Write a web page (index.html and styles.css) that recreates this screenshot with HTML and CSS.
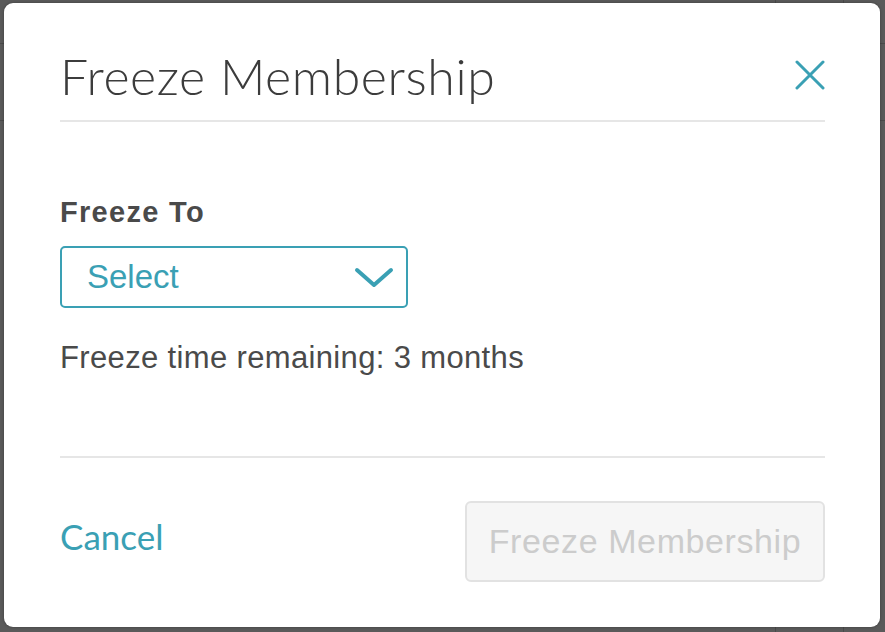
FILE: index.html
```html
<!DOCTYPE html>
<html lang="en">
<head>
<meta charset="utf-8">
<title>Freeze Membership</title>
<link rel="stylesheet" href="styles.css">
</head>
<body>
<div class="backdrop">
  <span class="bg-line bg-line-v1"></span>
  <span class="bg-line bg-line-v2"></span>
  <span class="bg-line bg-line-h1"></span>
  <span class="bg-line bg-line-h2"></span>
  <div class="modal">
    <header class="modal-header">
      <h1 class="modal-title">Freeze Membership</h1>
      <button class="close-btn" aria-label="Close">
        <svg width="30" height="30" viewBox="0 0 30 30"><path d="M2 2 L28 28 M28 2 L2 28" stroke="#3aa0b4" stroke-width="3" stroke-linecap="round" fill="none"/></svg>
      </button>
    </header>
    <section class="modal-body">
      <label class="field-label">Freeze To</label>
      <div class="select">
        <span class="select-text">Select</span>
        <svg class="chevron" width="40" height="24" viewBox="0 0 40 24"><path d="M3 4 L20 19 L37 4" stroke="#3aa0b4" stroke-width="4" stroke-linecap="round" stroke-linejoin="round" fill="none"/></svg>
      </div>
      <p class="info">Freeze time remaining: 3 months</p>
    </section>
    <footer class="modal-footer">
      <a class="cancel" href="#">Cancel</a>
      <button class="submit" disabled>Freeze Membership</button>
    </footer>
  </div>
</div>
</body>
</html>
```
FILE: styles.css
```css
html, body {
  margin: 0;
  padding: 0;
}
body {
  background: #5a5a5a;
  width: 885px;
  height: 632px;
  overflow: hidden;
}
.backdrop {
  position: relative;
  width: 885px;
  height: 632px;
  padding: 3px 5px 5px 4px;
  box-sizing: border-box;
}
.bg-line {
  position: absolute;
  background: #4a4a4a;
}
.bg-line-v1 { left: 775px; top: 0; width: 1px; height: 632px; }
.bg-line-v2 { left: 843px; top: 0; width: 1px; height: 632px; }
.bg-line-h1 { left: 0; top: 43px; width: 885px; height: 1px; }
.bg-line-h2 { left: 0; top: 120px; width: 885px; height: 1px; }
.modal {
  position: relative;
  width: 876px;
  height: 624px;
  background: #fff;
  border-radius: 9px;
  box-shadow: 0 0 3px rgba(0,0,0,0.35);
  padding: 0 55px 0 56px;
  box-sizing: border-box;
  display: flex;
  flex-direction: column;
}
.modal-header {
  height: 117px;
  flex-shrink: 0;
  border-bottom: 2px solid #e6e6e6;
  display: flex;
  align-items: flex-start;
  justify-content: space-between;
}
.modal-title {
  margin: 48px 0 0;
  font-family: "Lato", sans-serif;
  font-weight: 300;
  font-size: 50px;
  letter-spacing: 0.6px;
  color: #3c3c3c;
  line-height: 1;
}
.close-btn {
  border: 0;
  background: none;
  padding: 0;
  margin-top: 57px;
  width: 30px;
  height: 30px;
  display: flex;
}
.modal-body {
  height: 334px;
  flex-shrink: 0;
  border-bottom: 2px solid #e6e6e6;
  display: flex;
  flex-direction: column;
  align-items: flex-start;
  font-family: "Liberation Sans", Arial, sans-serif;
}
.field-label {
  margin-top: 74px;
  font-weight: 700;
  font-size: 29px;
  letter-spacing: 1.3px;
  line-height: 32px;
  color: #4a4a4a;
}
.select {
  margin-top: 18px;
  width: 348px;
  height: 62px;
  flex-shrink: 0;
  box-sizing: border-box;
  border: 2px solid #3aa0b4;
  border-radius: 5px;
  display: flex;
  align-items: center;
  justify-content: space-between;
  padding: 0 12px 0 25px;
}
.select-text {
  font-size: 33px;
  color: #3aa0b4;
}
.chevron {
  margin-top: 2px;
}
.info {
  margin: 33px 0 0;
  font-size: 31px;
  letter-spacing: 0.35px;
  line-height: 34px;
  color: #4a4a4a;
}
.modal-footer {
  display: flex;
  align-items: flex-start;
  justify-content: space-between;
  padding-top: 43px;
}
.cancel {
  margin-top: 14px;
  font-family: "Lato", sans-serif;
  font-size: 35px;
  color: #3aa0b4;
  text-decoration: none;
}
.submit {
  width: 360px;
  height: 81px;
  box-sizing: border-box;
  background: #f6f6f6;
  border: 2px solid #e2e2e2;
  border-radius: 6px;
  font-family: "Liberation Sans", Arial, sans-serif;
  font-size: 34px;
  letter-spacing: 0.6px;
  color: #cccccc;
  padding: 0;
}
```
